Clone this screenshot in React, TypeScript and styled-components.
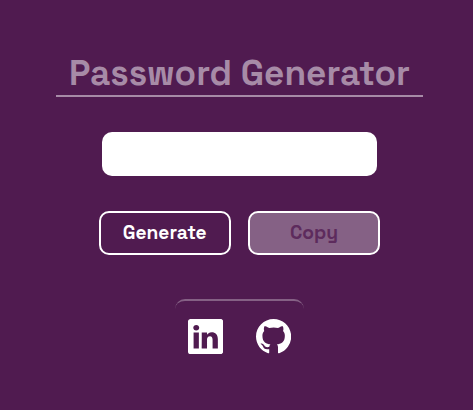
import React from "react";
import styled, { createGlobalStyle } from "styled-components";
import { BsGithub, BsLinkedin } from "react-icons/bs";

const GlobalStyle = createGlobalStyle`
  * { box-sizing: border-box; }
  body {
    margin: 0;
    background: #501b50;
    color: #fff;
    font-family: "Space Grotesk", Inter, "Liberation Sans", sans-serif;
  }
`;

const Page = styled.main`
  min-height: 410px;
  padding: 51px 0 0 6px;
  display: flex;
  flex-direction: column;
  align-items: center;
`;

const Title = styled.h1`
  width: 367px;
  height: 46px;
  margin: 0 0 35px;
  border-bottom: 2px solid #a78ba7;
  color: #a78ba7;
  font-size: 35.2px;
  font-weight: 700;
  line-height: 44px;
  text-align: center;
  white-space: nowrap;
`;

const PasswordField = styled.input`
  width: 275px;
  height: 44px;
  padding: 0 12px;
  border: 0;
  border-radius: 10px;
  background: #fff;
  font: inherit;
  outline: none;
`;

const Actions = styled.div`
  display: flex;
  gap: 17px;
  margin-top: 35px;
`;

const Button = styled.button`
  width: 132px;
  height: 44px;
  padding: 0 0.6px 0 0;
  border: 2px solid #fff;
  border-radius: 10px;
  background: transparent;
  color: #fff;
  font-family: inherit;
  font-size: 19.2px;
  font-weight: 700;
  line-height: 38px;

  &:disabled {
    padding: 0;
    background: #856185;
    color: #5d2b5d;
  }
`;

const Social = styled.footer`
  width: 129px;
  height: 60px;
  margin-top: 44px;
  padding-top: 18px;
  border-top: 2px solid #856185;
  border-radius: 10px 10px 0 0;
  display: flex;
  justify-content: center;
  gap: 33.4px;
`;

const SocialLink = styled.a`
  display: flex;
  color: #fff;
  font-size: 35.2px;
`;

export default function App() {
  return (
    <>
      <GlobalStyle />
      <Page>
        <Title>Password Generator</Title>
        <PasswordField aria-label="Password" readOnly />
        <Actions>
          <Button>Generate</Button>
          <Button disabled>Copy</Button>
        </Actions>
        <Social>
          <SocialLink href="#" aria-label="LinkedIn"><BsLinkedin /></SocialLink>
          <SocialLink href="#" aria-label="GitHub"><BsGithub /></SocialLink>
        </Social>
      </Page>
    </>
  );
}
